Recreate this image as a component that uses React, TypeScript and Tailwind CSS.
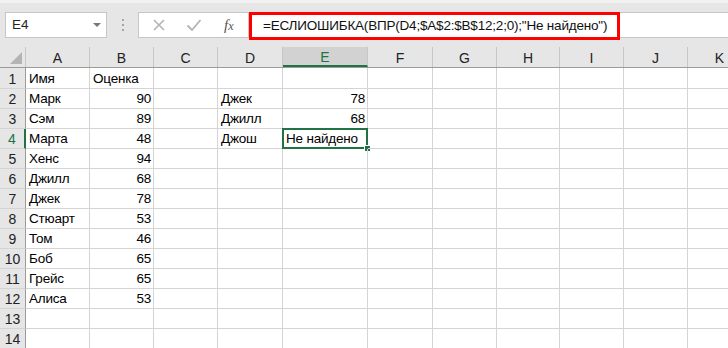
const cols = [
  { l: "A", w: "w-[64px]" },
  { l: "B", w: "w-[64px]" },
  { l: "C", w: "w-[64px]" },
  { l: "D", w: "w-[65px]" },
  { l: "E", w: "w-[85px]" },
  { l: "F", w: "w-[65px]" },
  { l: "G", w: "w-[64px]" },
  { l: "H", w: "w-[63px]" },
  { l: "I", w: "w-[64px]" },
  { l: "J", w: "w-[64px]" },
  { l: "K", w: "w-[64px]" },
];

type Cell = { t: string; right?: boolean };
const data: Record<number, Record<number, Cell>> = {
  1: { 0: { t: "Имя" }, 1: { t: "Оценка" } },
  2: { 0: { t: "Марк" }, 1: { t: "90", right: true }, 3: { t: "Джек" }, 4: { t: "78", right: true } },
  3: { 0: { t: "Сэм" }, 1: { t: "89", right: true }, 3: { t: "Джилл" }, 4: { t: "68", right: true } },
  4: { 0: { t: "Марта" }, 1: { t: "48", right: true }, 3: { t: "Джош" }, 4: { t: "Не найдено" } },
  5: { 0: { t: "Хенс" }, 1: { t: "94", right: true } },
  6: { 0: { t: "Джилл" }, 1: { t: "68", right: true } },
  7: { 0: { t: "Джек" }, 1: { t: "78", right: true } },
  8: { 0: { t: "Стюарт" }, 1: { t: "53", right: true } },
  9: { 0: { t: "Том" }, 1: { t: "46", right: true } },
  10: { 0: { t: "Боб" }, 1: { t: "65", right: true } },
  11: { 0: { t: "Грейс" }, 1: { t: "65", right: true } },
  12: { 0: { t: "Алиса" }, 1: { t: "53", right: true } },
};

const rows = Array.from({ length: 14 }, (_, i) => i + 1);

export default function App() {
  return (
    <div
      className="w-[728px] h-[348px] overflow-hidden bg-white text-black"
      style={{ fontFamily: '"Liberation Sans", Arial, sans-serif' }}
    >
      {/* formula bar */}
      <div className="h-[47px] bg-[#e6e6e6] border-t-[3px] border-[#f1f1f1] flex items-start pt-[9px] pl-[5px]">
        <div className="w-[102px] h-[26px] bg-white border border-[#c6c6c6] flex items-center justify-between pl-[6px] pr-[5px]">
          <span className="text-[13.5px] text-[#222]">E4</span>
          <span className="w-0 h-0 border-l-[4px] border-r-[4px] border-t-[4px] border-l-transparent border-r-transparent border-t-[#777]" />
        </div>
        <div className="w-[31px] h-[26px] flex flex-col items-center justify-center gap-[3px]">
          <span className="w-[2px] h-[2px] bg-[#a6a6a6]" />
          <span className="w-[2px] h-[2px] bg-[#a6a6a6]" />
          <span className="w-[2px] h-[2px] bg-[#a6a6a6]" />
        </div>
        <div className="w-[111px] h-[26px] bg-white border border-[#c6c6c6] flex items-center">
          <svg width="14" height="14" viewBox="0 0 14 14" className="ml-[13px]">
            <path d="M2 2 L12 12 M12 2 L2 12" stroke="#b3b3b3" strokeWidth="1.6" />
          </svg>
          <svg width="16" height="14" viewBox="0 0 16 14" className="ml-[20px]">
            <path d="M1.5 7.5 L6 12 L14.5 2" stroke="#b3b3b3" strokeWidth="1.8" fill="none" />
          </svg>
          <span
            className="ml-[22px] text-[15px] italic text-[#555]"
            style={{ fontFamily: '"Liberation Serif", serif' }}
          >
            f<span className="text-[12px]">x</span>
          </span>
        </div>
        <div className="w-[371px] h-[28px] border-[3px] border-[#ff0000] bg-white flex items-center pl-[11px]">
          <span className="text-[13.5px] tracking-[-0.2px] whitespace-nowrap text-[#111]">
            =ЕСЛИОШИБКА(ВПР(D4;$A$2:$B$12;2;0);"Не найдено")
          </span>
        </div>
        <div className="flex-1 h-[26px] bg-white border-y border-[#c6c6c6]" />
      </div>

      {/* column headers */}
      <div className="flex h-[21px] bg-[#e6e6e6] border-b border-[#9b9b9b]">
        <div className="w-[26px] shrink-0 border-r border-[#c6c6c6] flex items-end justify-end p-[3px]">
          <span
            className="w-0 h-0"
            style={{ borderBottom: "12px solid #b4b4b4", borderLeft: "12px solid transparent" }}
          />
        </div>
        {cols.map((c) => (
          <div
            key={c.l}
            className={`${c.w} shrink-0 border-r border-[#c6c6c6] flex items-center justify-center pt-[2px] text-[14px] ${
              c.l === "E" ? "bg-[#d2d2d2] text-[#217346] border-b-2 border-b-[#217346]" : "text-[#222]"
            }`}
          >
            {c.l}
          </div>
        ))}
      </div>

      {/* rows */}
      {rows.map((r) => (
        <div key={r} className={`flex ${r === 1 ? "h-[21px]" : "h-[20px]"}`}>
          <div
            className={`w-[26px] shrink-0 bg-[#e6e6e6] border-b border-[#d4d4d4] flex items-center justify-center pt-[2px] text-[14px] ${
              r === 4
                ? "bg-[#d2d2d2] text-[#217346] border-r-2 border-r-[#217346]"
                : "text-[#222] border-r border-r-[#9b9b9b]"
            }`}
          >
            {r}
          </div>
          {cols.map((c, ci) => {
            const cell = data[r]?.[ci];
            const sel = r === 4 && ci === 4;
            return (
              <div
                key={c.l}
                className={`${c.w} shrink-0 relative border-r border-b border-[#d4d4d4] flex items-center pt-[2px] text-[13.5px] tracking-[-0.2px] whitespace-nowrap ${
                  cell?.right ? "justify-end pr-[2px]" : "pl-[3px]"
                }`}
              >
                {cell?.t}
                {sel && (
                  <>
                    <span className="absolute -left-px -top-px -right-px -bottom-px border-2 border-[#217346] pointer-events-none" />
                    <span className="absolute -right-[4px] -bottom-[4px] w-[7px] h-[7px] bg-[#217346] border border-white" />
                  </>
                )}
              </div>
            );
          })}
        </div>
      ))}
    </div>
  );
}
